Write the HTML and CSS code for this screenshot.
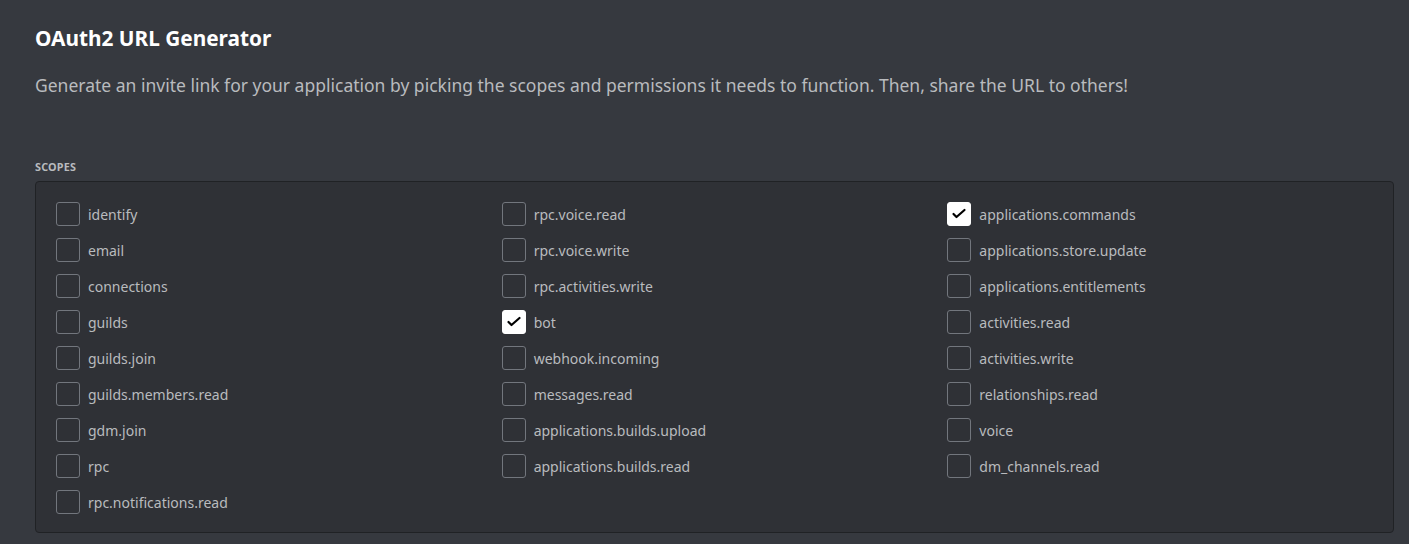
FILE: index.html
```html
<!DOCTYPE html>
<html>
<head>
<meta charset="utf-8">
<link rel="stylesheet" href="styles.css">
</head>
<body>
<div class="page">
  <h1 class="title">OAuth2 URL Generator</h1>
  <p class="desc">Generate an invite link for your application by picking the scopes and permissions it needs to function. Then, share the URL to others!</p>
  <div class="label">Scopes</div>
  <div class="box">
    <div class="grid">
      <div class="item"><span class="cb"></span><span class="txt">identify</span></div>
      <div class="item"><span class="cb"></span><span class="txt">rpc.voice.read</span></div>
      <div class="item"><span class="cb on"><svg viewBox="0 0 24 24" width="24" height="24"><path d="M6.5 12L9.5 15L17.5 8" fill="none" stroke="#000" stroke-width="2.2" stroke-linecap="round" stroke-linejoin="round"/></svg></span><span class="txt">applications.commands</span></div>

      <div class="item"><span class="cb"></span><span class="txt">email</span></div>
      <div class="item"><span class="cb"></span><span class="txt">rpc.voice.write</span></div>
      <div class="item"><span class="cb"></span><span class="txt">applications.store.update</span></div>

      <div class="item"><span class="cb"></span><span class="txt">connections</span></div>
      <div class="item"><span class="cb"></span><span class="txt">rpc.activities.write</span></div>
      <div class="item"><span class="cb"></span><span class="txt">applications.entitlements</span></div>

      <div class="item"><span class="cb"></span><span class="txt">guilds</span></div>
      <div class="item"><span class="cb on"><svg viewBox="0 0 24 24" width="24" height="24"><path d="M6.5 12L9.5 15L17.5 8" fill="none" stroke="#000" stroke-width="2.2" stroke-linecap="round" stroke-linejoin="round"/></svg></span><span class="txt">bot</span></div>
      <div class="item"><span class="cb"></span><span class="txt">activities.read</span></div>

      <div class="item"><span class="cb"></span><span class="txt">guilds.join</span></div>
      <div class="item"><span class="cb"></span><span class="txt">webhook.incoming</span></div>
      <div class="item"><span class="cb"></span><span class="txt">activities.write</span></div>

      <div class="item"><span class="cb"></span><span class="txt">guilds.members.read</span></div>
      <div class="item"><span class="cb"></span><span class="txt">messages.read</span></div>
      <div class="item"><span class="cb"></span><span class="txt">relationships.read</span></div>

      <div class="item"><span class="cb"></span><span class="txt">gdm.join</span></div>
      <div class="item"><span class="cb"></span><span class="txt">applications.builds.upload</span></div>
      <div class="item"><span class="cb"></span><span class="txt">voice</span></div>

      <div class="item"><span class="cb"></span><span class="txt">rpc</span></div>
      <div class="item"><span class="cb"></span><span class="txt">applications.builds.read</span></div>
      <div class="item"><span class="cb"></span><span class="txt">dm_channels.read</span></div>

      <div class="item"><span class="cb"></span><span class="txt">rpc.notifications.read</span></div>
    </div>
  </div>
</div>
</body>
</html>
```
FILE: styles.css
```css
html, body {
  margin: 0;
  padding: 0;
  background: #36393f;
}
body {
  font-family: "Noto Sans", "Open Sans", sans-serif;
  width: 1409px;
  height: 544px;
  overflow: hidden;
}
.page {
  padding: 24px 15px 0 35px;
}
.title {
  margin: 0;
  font-size: 20.8px;
  line-height: 28px;
  font-weight: 700;
  color: #ffffff;
}
.desc {
  margin: 21px 0 0 0;
  font-size: 17.5px;
  line-height: 24px;
  color: #b9bbbe;
}
.label {
  margin-top: 63px;
  font-size: 10.8px;
  line-height: 14px;
  font-weight: 700;
  text-transform: uppercase;
  color: #b9bbbe;
  letter-spacing: 0.02em;
}
.box {
  margin-top: 7px;
  background: #2f3136;
  border: 1px solid #202225;
  border-radius: 4px;
  padding: 20px 0 18px 20px;
}
.grid {
  display: grid;
  grid-template-columns: repeat(3, 1fr);
  row-gap: 12px;
}
.item {
  display: flex;
  align-items: center;
  gap: 8px;
  height: 24px;
}
.cb {
  box-sizing: border-box;
  width: 24px;
  height: 24px;
  border: 1px solid #72767d;
  border-radius: 3px;
  display: flex;
  align-items: center;
  justify-content: center;
  flex: none;
}
.cb.on {
  background: #ffffff;
  border-color: #ffffff;
}
.cb svg {
  display: block;
  margin: -1px;
}
.txt {
  font-size: 14px;
  color: #b9bbbe;
}
```
